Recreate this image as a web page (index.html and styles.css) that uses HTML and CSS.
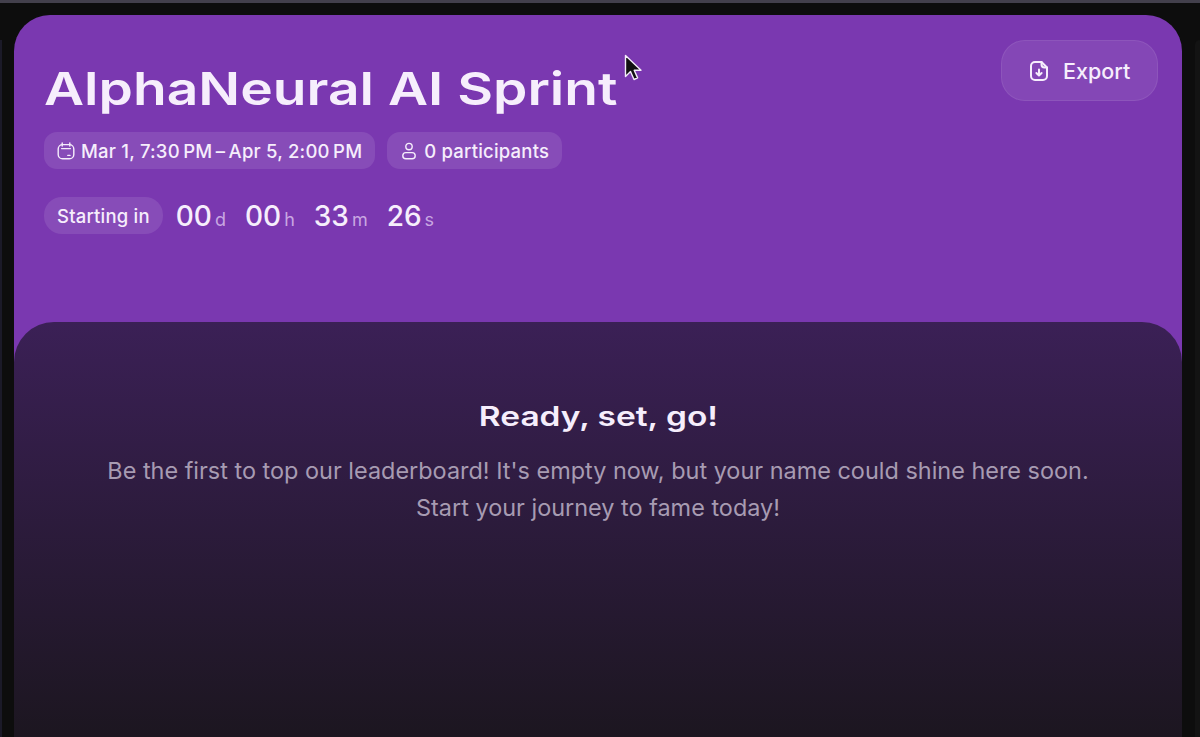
FILE: index.html
```html
<!DOCTYPE html>
<html lang="en">
<head>
  <meta charset="UTF-8">
  <title>AlphaNeural AI Sprint</title>
  <link rel="stylesheet" href="styles.css">
</head>
<body>
  <div class="topbar"></div>
  <div class="edge edge-left"></div>
  <div class="edge edge-right"></div>
  <div class="card">
    <header class="hero">
      <div class="hero-top">
        <h1>AlphaNeural AI Sprint</h1>
        <button class="export">
          <svg class="export-icon" viewBox="0 0 20 22" fill="none" stroke="currentColor" stroke-width="2" stroke-linecap="round" stroke-linejoin="round">
            <path d="M6 2h6.5L18 7.5V16a4 4 0 0 1-4 4H6a4 4 0 0 1-4-4V6a4 4 0 0 1 4-4z"/>
            <path d="M12.5 2v2.5a3 3 0 0 0 3 3H18"/>
            <path d="M10 9.5v6M7.4 13l2.6 2.6 2.6-2.6"/>
          </svg>
          Export
        </button>
      </div>
      <div class="tags">
        <div class="tag">
          <svg class="tag-icon" viewBox="0 0 18 18" fill="none" stroke="currentColor" stroke-width="1.4" stroke-linecap="round">
            <rect x="1.2" y="2.6" width="15.6" height="14.2" rx="4.4"/>
            <path d="M5.2 1v3M12.8 1v3M4.6 6.6h8.8M10.8 13.4h2.2"/>
          </svg>
          <span>Mar 1, 7:30&#8201;PM&#8201;&ndash;&#8201;Apr 5, 2:00&#8201;PM</span>
        </div>
        <div class="tag">
          <svg class="tag-icon" viewBox="0 0 18 18" fill="none" stroke="currentColor" stroke-width="1.4">
            <circle cx="9" cy="4.6" r="3.2"/>
            <rect x="2.8" y="10.6" width="12.4" height="6.2" rx="3.1"/>
          </svg>
          <span>0 participants</span>
        </div>
      </div>
      <div class="countdown">
        <div class="tag starting">Starting in</div>
        <div class="unit"><b>00</b><i>d</i></div>
        <div class="unit"><b>00</b><i>h</i></div>
        <div class="unit"><b>33</b><i>m</i></div>
        <div class="unit"><b>26</b><i>s</i></div>
      </div>
    </header>
    <section class="board">
      <h2>Ready, set, go!</h2>
      <p>Be the first to top our leaderboard! It's empty now, but your name could shine here soon.<br>Start your journey to fame today!</p>
    </section>
  </div>
  <svg class="cursor" viewBox="0 0 18 28">
    <path d="M1.5 1.5v21l5-5 3.5 8 3.6-1.6-3.4-7.6H17z" fill="#111" stroke="#f4ecfa" stroke-width="1.4" stroke-linejoin="round"/>
  </svg>
</body>
</html>
```

FILE: styles.css
```css
* {
  box-sizing: border-box;
}

body {
  margin: 0;
  padding: 12px 18px 0 14px;
  height: 737px;
  overflow: hidden;
  position: relative;
  background: #0d0d0d;
  color: #f6eefc;
  font-family: Inter, "Liberation Sans", sans-serif;
}

.topbar {
  position: absolute;
  top: 0;
  left: 0;
  right: 0;
  height: 3px;
  background: #43404c;
}

/* edges of the neighbouring panels */
.edge {
  position: absolute;
  top: 40px;
  bottom: 0;
}

.edge-left {
  left: 0;
  width: 2px;
  background: #1b1a28;
}

.edge-right {
  left: 1195px;
  right: 0;
  background: #131313;
  border-radius: 14px 0 0 0;
}

.card {
  margin-top: 3px;
  height: 722px;
  background: #7a38b0;
  border-radius: 36px 36px 0 0;
  display: flex;
  flex-direction: column;
}

.hero {
  height: 307px;
  padding: 25px 24px 0 30px;
}

.hero-top {
  display: flex;
  justify-content: space-between;
  align-items: flex-start;
}

h1 {
  margin: 22px 0 0;
  font-size: 45px;
  line-height: 54px;
  font-weight: 600;
  transform: scaleX(1.225);
  transform-origin: left center;
}

.export {
  display: flex;
  align-items: center;
  gap: 14px;
  width: 157px;
  height: 61px;
  padding: 0 0 0 27px;
  border: 1px solid rgba(255, 255, 255, 0.08);
  border-radius: 24px;
  background: rgba(255, 255, 255, 0.08);
  color: #f6eefc;
  font-family: inherit;
  font-size: 21.5px;
  font-weight: 500;
}

.export-icon {
  width: 20px;
  height: 22px;
}

.tags {
  display: flex;
  gap: 12px;
  margin-top: 16px;
}

.tag {
  display: flex;
  align-items: center;
  gap: 6px;
  height: 37px;
  padding: 0 13px;
  border-radius: 13px;
  background: rgba(255, 255, 255, 0.1);
  font-size: 18.5px;
  letter-spacing: 0.2px;
  font-weight: 500;
}

.tag-icon {
  width: 18px;
  height: 18px;
}

.countdown {
  display: flex;
  align-items: center;
  gap: 19px;
  margin-top: 28px;
}

.starting {
  border-radius: 18px;
  margin-right: -6px;
}

.unit {
  display: flex;
  align-items: baseline;
  gap: 3px;
}

.unit b {
  font-size: 28px;
  font-weight: 500;
}

.unit i {
  font-style: normal;
  font-size: 18px;
  color: #c9a7e2;
}

.board {
  flex: 1;
  padding-top: 77px;
  text-align: center;
  border-radius: 40px 40px 0 0;
  background: linear-gradient(#3b2056, #1c1620);
}

h2 {
  display: table;
  margin: 0 auto;
  font-size: 27px;
  line-height: 36px;
  font-weight: 600;
  transform: scaleX(1.24);
}

p {
  margin: 17px 0 0;
  font-size: 23.45px;
  line-height: 37px;
  color: #a79bb2;
}

.cursor {
  position: absolute;
  left: 624px;
  top: 54px;
  width: 18px;
  height: 28px;
}
```
